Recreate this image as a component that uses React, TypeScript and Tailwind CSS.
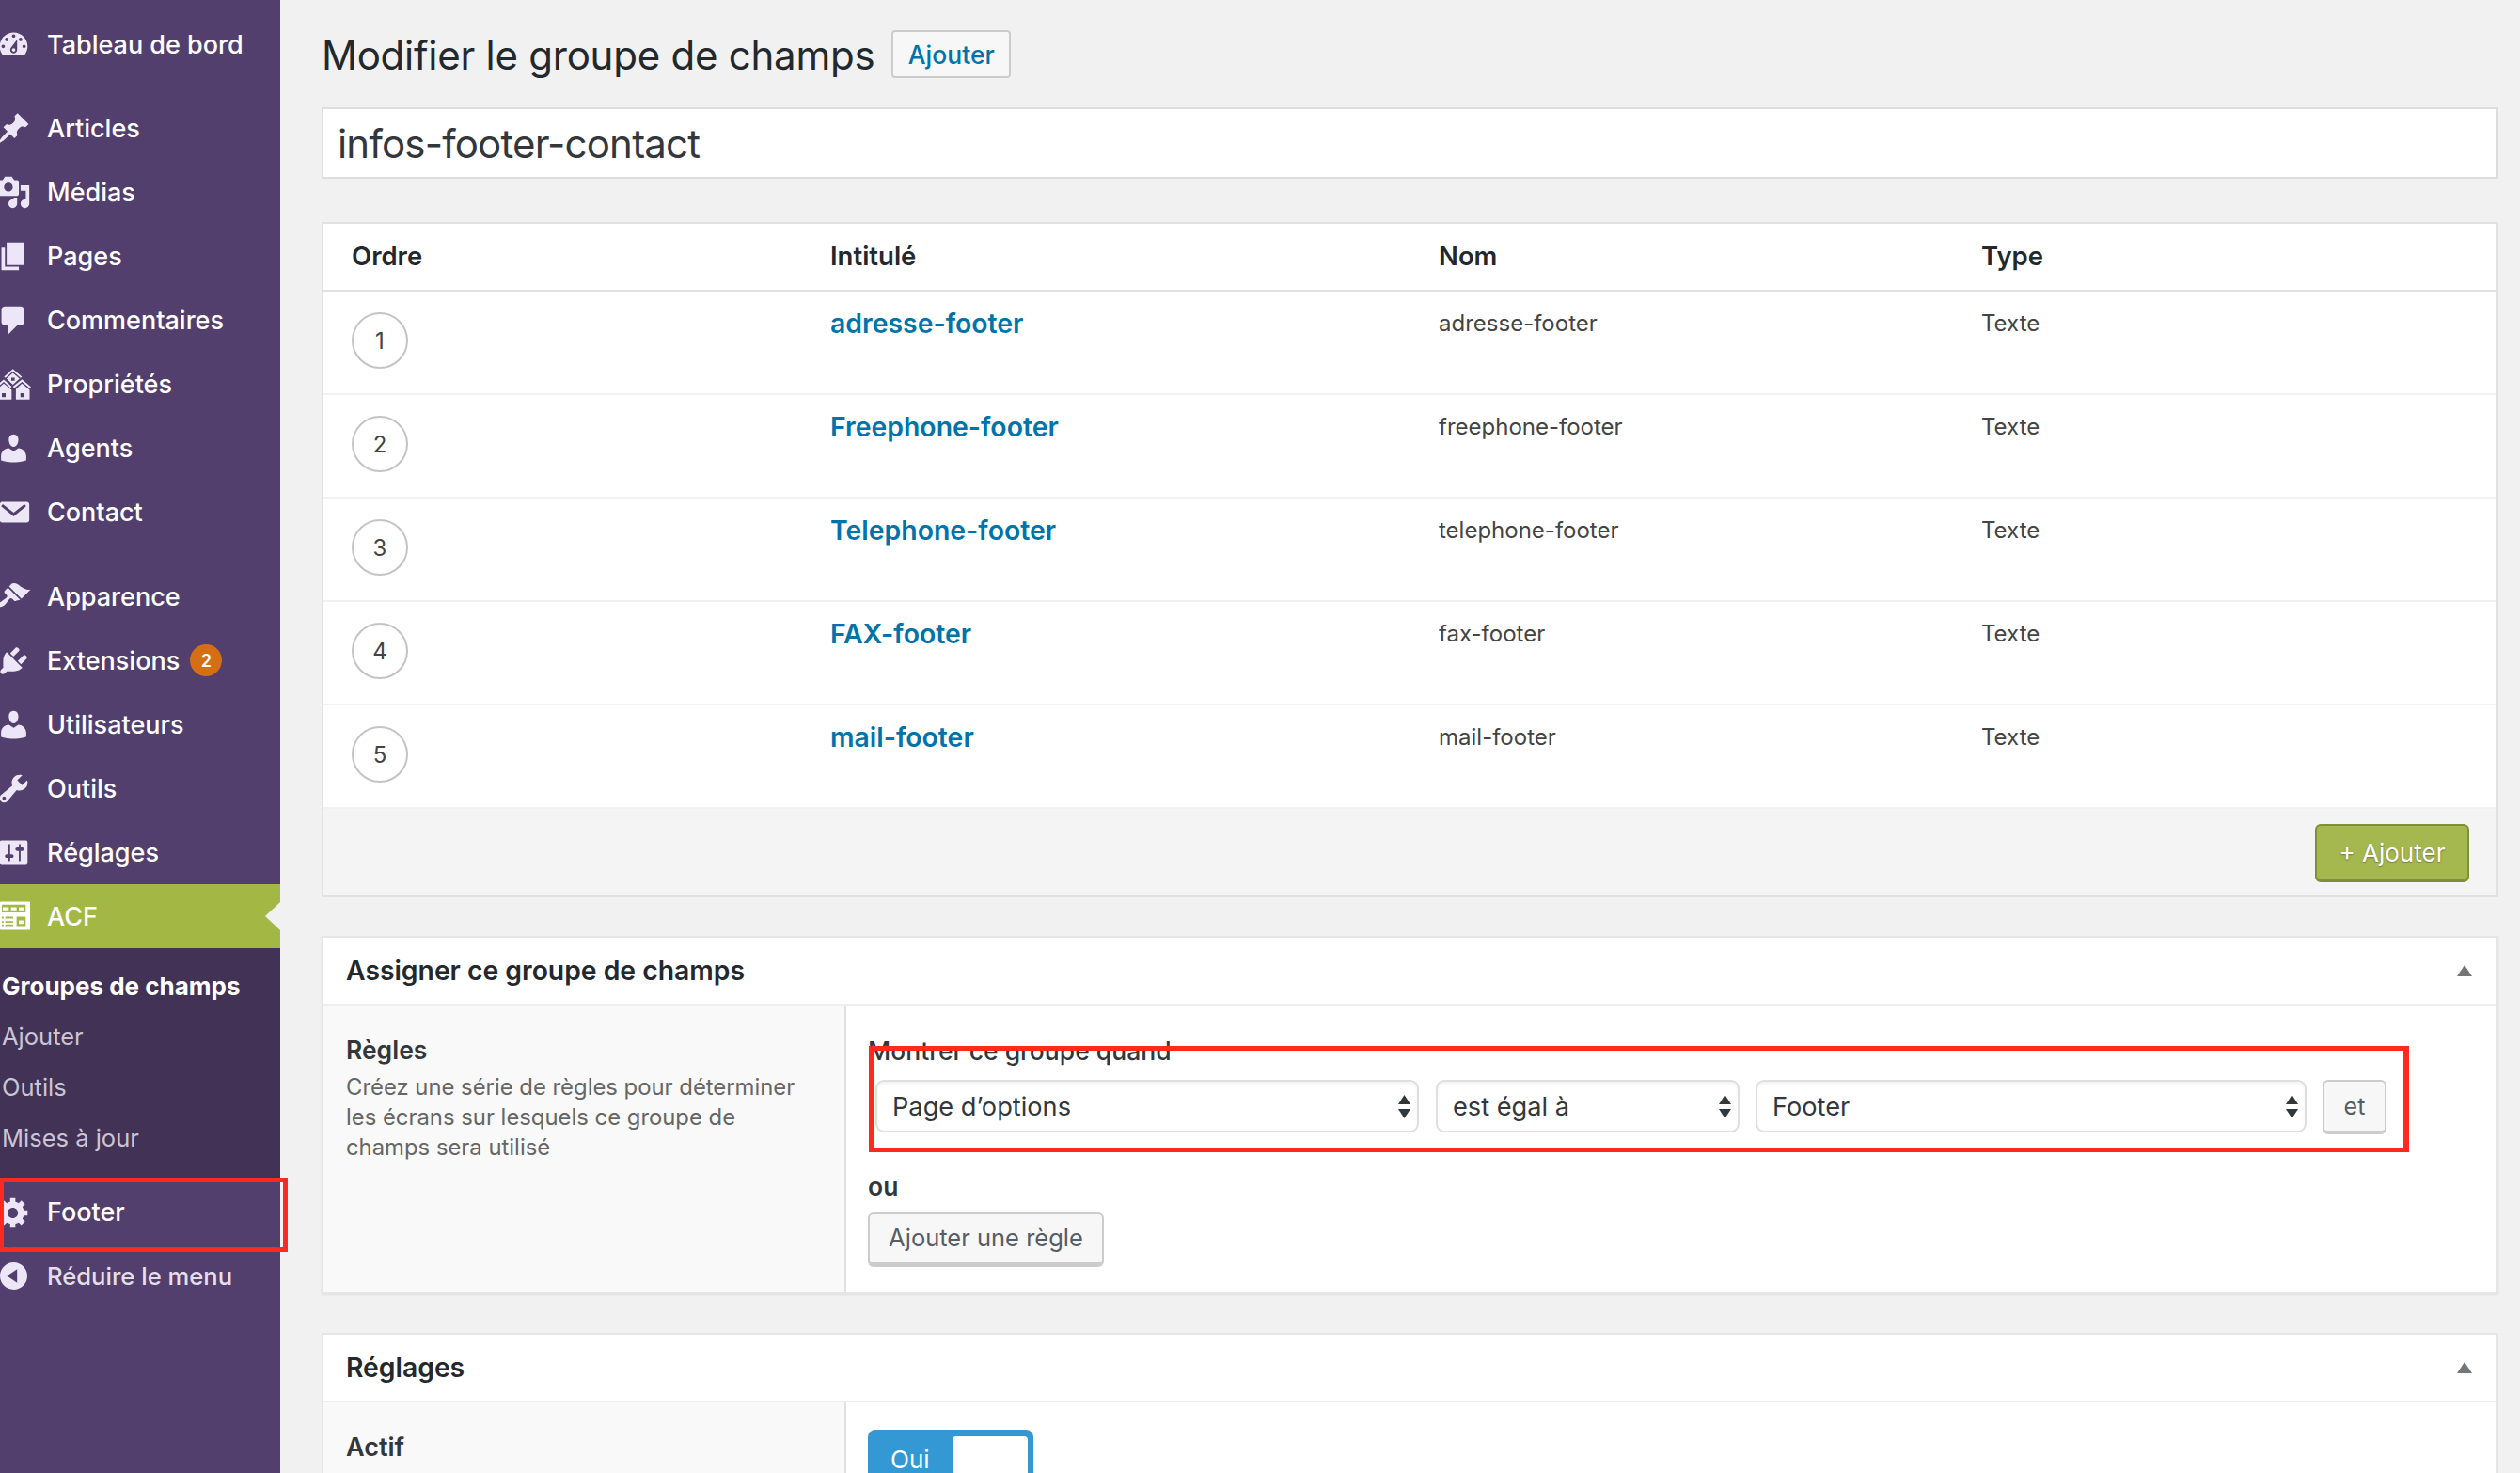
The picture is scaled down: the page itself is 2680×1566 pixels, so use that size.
import type { ReactNode } from "react";

// dashicons-style paths, viewBox 0 0 20 20
const icons = {
  dashboard:
    "M3.76 16h12.48c1.1-1.37 1.76-3.11 1.76-5 0-4.42-3.58-8-8-8s-8 3.58-8 8c0 1.89.66 3.63 1.76 5zM10 4c.55 0 1 .45 1 1s-.45 1-1 1-1-.45-1-1 .45-1 1-1zM6 6c.55 0 1 .45 1 1s-.45 1-1 1-1-.45-1-1 .45-1 1-1zm8 0c.55 0 1 .45 1 1s-.45 1-1 1-1-.45-1-1 .45-1 1-1zm-5.37 5.55L12 7v6c0 1.1-.9 2-2 2s-2-.9-2-2c0-.57.24-1.08.63-1.45zM4 10c.55 0 1 .45 1 1s-.45 1-1 1-1-.45-1-1 .45-1 1-1zm12 0c.55 0 1 .45 1 1s-.45 1-1 1-1-.45-1-1 .45-1 1-1zm-5 3c0-.55-.45-1-1-1s-1 .45-1 1 .45 1 1 1 1-.45 1-1z",
  pin: "M10.44 3.02l1.82-1.82 6.36 6.35-1.83 1.82c-1.05-.68-2.48-.57-3.41.36l-.75.75c-.92.93-1.04 2.35-.35 3.41l-1.83 1.82-2.41-2.41-2.8 2.79c-.42.42-3.38 2.71-3.8 2.29s1.86-3.39 2.28-3.81l2.79-2.79L4.1 9.36l1.83-1.82c1.05.69 2.48.57 3.4-.36l.75-.75c.93-.92 1.05-2.35.36-3.41z",
  media:
    "M13 11V4c0-.55-.45-1-1-1h-1.67L9 1H5L3.67 3H2c-.55 0-1 .45-1 1v7c0 .55.45 1 1 1h10c.55 0 1-.45 1-1zM7 4.5c1.38 0 2.5 1.12 2.5 2.5S8.38 9.5 7 9.5 4.5 8.38 4.5 7 5.62 4.5 7 4.5zM14 6h5v10.5c0 1.38-1.12 2.5-2.5 2.5S14 17.88 14 16.5s1.12-2.5 2.5-2.5c.17 0 .34.02.5.05V9h-3V6zm-4 8.05V13h2v3.5c0 1.38-1.12 2.5-2.5 2.5S7 17.88 7 16.5 8.12 14 9.5 14c.17 0 .34.02.5.05z",
  page: "M6 15V2h10v13H6zm-1 1h8v2H3V5h2v11z",
  comment:
    "M5 2h9c1.1 0 2 .9 2 2v7c0 1.1-.9 2-2 2h-2l-5 5v-5H5c-1.1 0-2-.9-2-2V4c0-1.1.9-2 2-2z",
  user: "M10 9.25c-2.27 0-2.73-3.44-2.73-3.44C7 4.02 7.82 2 9.97 2c2.16 0 2.98 2.02 2.71 3.81 0 0-.41 3.44-2.68 3.44zm0 2.57L12.72 10c2.39 0 4.52 2.33 4.52 4.53v2.49s-3.65 1.13-7.24 1.13c-3.65 0-7.24-1.13-7.24-1.13v-2.49c0-2.25 1.94-4.48 4.47-4.48z",
  mail: "M19 14.5v-9c0-.83-.67-1.5-1.5-1.5H3.49c-.83 0-1.5.67-1.5 1.5v9c0 .83.67 1.5 1.5 1.5H17.5c.83 0 1.5-.67 1.5-1.5zM17.2 6.6L10 12.4 2.8 6.6l1-1.2 6.2 4.9 6.2-4.9z",
  brush:
    "M14.48 11.06L7.41 3.99l1.5-1.5c.5-.56 2.3-.47 3.51.32 1.21.8 1.43 1.28 2.91 2.1 1.18.64 2.45 1.26 4.45.85zm-.71.71L6.7 4.7 4.93 6.47c-.39.39-.39 1.02 0 1.41l1.06 1.06c.39.39.39 1.03 0 1.42-.6.6-1.43 1.11-2.21 1.69-.35.26-.7.53-1.01.84C1.43 13.23 1 14.88 1.6 15.5c.6.6 2.25.17 3.59-1.18.31-.31.58-.66.85-1.02.57-.78 1.08-1.61 1.69-2.21.39-.39 1.02-.39 1.41 0l1.06 1.06c.39.39 1.02.39 1.41 0z",
  plug: "M13.11 4.36L9.87 7.6 8 5.73l3.24-3.24c.35-.34 1.05-.2 1.56.32.52.51.66 1.21.31 1.55zm-8 1.77l.91-1.12 9.01 9.01-1.19.84c-.71.71-2.63 1.16-3.82 1.16H6.14L4.9 17.26c-.59.59-1.54.59-2.12 0-.59-.58-.59-1.53 0-2.12l1.24-1.24v-3.88c0-1.13.4-3.19 1.09-3.89zm7.26 3.97l3.24-3.24c.34-.35 1.04-.21 1.55.31.52.51.66 1.21.31 1.55l-3.24 3.25z",
  wrench:
    "M16.68 9.77c-1.34 1.34-3.3 1.67-4.95.99l-5.41 6.52c-.99.99-2.59.99-3.58 0s-.99-2.59 0-3.57l6.52-5.42c-.68-1.65-.35-3.61.99-4.95 1.28-1.28 3.12-1.62 4.72-1.06l-2.89 2.89 2.82 2.82 2.86-2.87c.53 1.58.18 3.39-1.08 4.65zM3.81 16.21c.4.39 1.04.39 1.43 0 .4-.4.4-1.04 0-1.43-.39-.4-1.03-.4-1.43 0-.39.39-.39 1.03 0 1.43z",
  sliders:
    "M18 16V4c0-.55-.45-1-1-1H3c-.55 0-1 .45-1 1v12c0 .55.45 1 1 1h14c.55 0 1-.45 1-1zM8 11h1c.55 0 1 .45 1 1s-.45 1-1 1H8v1.5c0 .28-.22.5-.5.5s-.5-.22-.5-.5V13H6c-.55 0-1-.45-1-1s.45-1 1-1h1V5.5c0-.28.22-.5.5-.5s.5.22.5.5V11zm5-2h-1c-.55 0-1-.45-1-1s.45-1 1-1h1V5.5c0-.28.22-.5.5-.5s.5.22.5.5V7h1c.55 0 1 .45 1 1s-.45 1-1 1h-1v5.5c0 .28-.22.5-.5.5s-.5-.22-.5-.5V9z",
  gear: "M18 12h-2.18c-.17.7-.44 1.35-.81 1.93l1.54 1.54-2.1 2.1-1.54-1.54c-.58.36-1.23.63-1.91.79V19H8v-2.18c-.68-.16-1.33-.43-1.91-.79l-1.54 1.54-2.12-2.12 1.54-1.54c-.36-.58-.63-1.23-.79-1.91H1V9.03h2.17c.16-.7.44-1.35.8-1.94L2.43 5.55l2.1-2.1 1.54 1.54c.58-.37 1.24-.64 1.93-.81V2h3v2.18c.68.16 1.33.43 1.91.79l1.54-1.54 2.12 2.12-1.54 1.54c.36.59.64 1.24.8 1.94H18V12zm-8.5 1.5c1.66 0 3-1.34 3-3s-1.34-3-3-3-3 1.34-3 3 1.34 3 3 3z",
  collapse:
    "M10 2.16c4.33 0 7.84 3.51 7.84 7.84s-3.51 7.84-7.84 7.84S2.16 14.33 2.16 10 5.71 2.16 10 2.16zm2 11.72V6.12L6.18 9.97z",
  houses:
    "M4.5 5.68L9.55 1.17 14.8 5.68 14 6.4 9.55 2.5 5.3 6.4zM9.55 3.5L5.9 6.8l3.65 3.5 3.85-3.5zM8.65 6.2h1.95v1.8H8.65zM-1 11.5l5.32-4.2 4.58 4.1-.7.7-3.88-3.4-4.62 3.8zM4.32 9.6L0 13.3v5.5h8.83v-5.6zM3.24 15.2H5.4v2.2H3.24zM9.6 11.4l5.2-4.2 5.2 4.4-.7.7-4.5-3.7-4.5 3.7zM14.8 9.6l-3.5 3.3v5.9h7.9v-5.6zM13.9 15.2h2.3v2.2h-2.3z",
  acf: "M2.16 1.9c0-.3.25-.55.55-.55H19c.25 0 .46.2.46.45V17.1c0 .25-.2.47-.46.47H2.7c-.3 0-.54-.24-.54-.54zM3.24 3.1v4.4H16.9V3.1zM3.8 4.6h3.4v1.8H3.8zM8.5 4.6h3.2v1.8H8.5zM13 4.6h3.2v1.8H13zM3.2 10v1.1h1.1V10zM5.2 10v1.1h4.5V10zM3.2 12.6v.9h1.1v-.9zM5.2 12.6v.9h4.5v-.9zM3.2 14.5v.9h1.1v-.9zM5.2 14.5v.9h4.5v-.9zM11.7 10v5.4h5.2V10zM13 12.2h3v2h-3z",
};

function DashIcon({ d, className }: { d: string; className?: string }) {
  return (
    <svg viewBox="0 0 20 20" fill="currentColor" fillRule="evenodd" className={className}>
      <path d={d} />
    </svg>
  );
}

function MenuItem({
  icon,
  label,
  children,
  active,
  dim,
}: {
  icon: string;
  label: string;
  children?: ReactNode;
  active?: boolean;
  dim?: boolean;
}) {
  return (
    <div
      className={`relative flex h-[68px] items-center ${active ? "bg-[#a3b745] text-white" : dim ? "text-[#e3dfe9]" : "text-white"}`}
    >
      <DashIcon
        d={icon}
        className={`ml-[-4px] mr-[17px] h-[37px] w-[37px] shrink-0 ${active ? "text-white" : "text-[#ece6f6]"}`}
      />
      <span className={`pt-[2px] ${dim ? "text-[25.6px]" : "text-[27px]"} font-medium`}>{label}</span>
      {children}
      {active && (
        <span className="absolute right-0 top-[19px] h-0 w-0 border-y-[15px] border-r-[16px] border-y-transparent border-r-[#f1f1f1]" />
      )}
    </div>
  );
}

function Sidebar() {
  return (
    <aside className="flex h-full w-[298px] shrink-0 flex-col bg-[#523f6d] pt-[13px]">
      <MenuItem icon={icons.dashboard} label="Tableau de bord" />
      <div className="h-[21px]" />
      <MenuItem icon={icons.pin} label="Articles" />
      <MenuItem icon={icons.media} label="Médias" />
      <MenuItem icon={icons.page} label="Pages" />
      <MenuItem icon={icons.comment} label="Commentaires" />
      <MenuItem icon={icons.houses} label="Propriétés" />
      <MenuItem icon={icons.user} label="Agents" />
      <MenuItem icon={icons.mail} label="Contact" />
      <div className="h-[22px]" />
      <MenuItem icon={icons.brush} label="Apparence" />
      <MenuItem icon={icons.plug} label="Extensions">
        <span className="ml-[11px] flex h-[34px] w-[34px] items-center justify-center rounded-full bg-[#d46f15] text-[18px] font-semibold text-white">
          2
        </span>
      </MenuItem>
      <MenuItem icon={icons.user} label="Utilisateurs" />
      <MenuItem icon={icons.wrench} label="Outils" />
      <MenuItem icon={icons.sliders} label="Réglages" />
      <MenuItem icon={icons.acf} label="ACF" active />
      <div className="flex flex-col bg-[#413256] pb-[15px] pl-[2px] pt-[13px] text-[25.5px] text-[#cbc5d3]">
        <div className="flex h-[54px] items-center text-[26px] font-bold text-white">Groupes de champs</div>
        <div className="flex h-[54px] items-center">Ajouter</div>
        <div className="flex h-[54px] items-center">Outils</div>
        <div className="flex h-[54px] items-center">Mises à jour</div>
      </div>
      <div className="h-[2px]" />
      <MenuItem icon={icons.gear} label="Footer" />
      <MenuItem icon={icons.collapse} label="Réduire le menu" dim />
    </aside>
  );
}

const fields = [
  { n: 1, label: "adresse-footer", name: "adresse-footer" },
  { n: 2, label: "Freephone-footer", name: "freephone-footer" },
  { n: 3, label: "Telephone-footer", name: "telephone-footer" },
  { n: 4, label: "FAX-footer", name: "fax-footer" },
  { n: 5, label: "mail-footer", name: "mail-footer" },
];

function FieldsTable() {
  return (
    <div className="border-2 border-[#e1e1e1] bg-white">
      <div className="grid h-[72px] grid-cols-[509px_647px_577px_1fr] items-center border-b-2 border-[#e1e1e1] pl-[30px] text-[27.5px] font-semibold text-[#23282d]">
        <div>Ordre</div>
        <div>Intitulé</div>
        <div>Nom</div>
        <div>Type</div>
      </div>
      {fields.map((f) => (
        <div
          key={f.n}
          className="grid h-[110px] grid-cols-[509px_647px_577px_1fr] items-start border-b-2 border-[#f1f1f1] pl-[30px]"
        >
          <div className="pt-[22px]">
            <div className="flex h-[60px] w-[60px] items-center justify-center rounded-full border-2 border-[#c4c4c4] pt-[1px] text-[24px] text-[#444]">
              {f.n}
            </div>
          </div>
          <div className="pt-[18px] text-[28.4px] font-semibold leading-[32px] text-[#0073aa]">{f.label}</div>
          <div className="pt-[18px] text-[24px] leading-[32px] text-[#444]">{f.name}</div>
          <div className="pt-[18px] text-[24px] leading-[32px] text-[#444]">Texte</div>
        </div>
      ))}
      <div className="flex h-[92px] items-start justify-end bg-[#f4f4f4] pr-[29px] pt-[16px]">
        <button className="flex h-[62px] w-[164px] items-center justify-center rounded-[6px] border-2 border-b-[4px] border-[#7f8f36] bg-[#a5b74f] text-[26px] text-white [text-shadow:0_1px_2px_rgba(0,0,0,0.35)]">
          + Ajouter
        </button>
      </div>
    </div>
  );
}

function SectionHeader({ title }: { title: string }) {
  return (
    <div className="flex h-[72px] items-center justify-between border-b-2 border-[#eeeeee] pl-[24px] pr-[26px]">
      <h2 className="text-[28.3px] font-semibold text-[#23282d]">{title}</h2>
      <svg viewBox="0 0 16 12" className="h-[12px] w-[16px] text-[#72777c]" fill="currentColor">
        <polygon points="8,0 16,12 0,12" />
      </svg>
    </div>
  );
}

function FakeSelect({ value, className }: { value: string; className: string }) {
  return (
    <div
      className={`flex h-[56px] items-center justify-between rounded-[9px] border-2 border-[#dfdfdf] bg-white pl-[16px] pr-[7px] text-[27.2px] text-[#32373c] shadow-[inset_0_2px_3px_rgba(0,0,0,0.06)] ${className}`}
    >
      <span className="pt-[2px]">{value}</span>
      <svg viewBox="0 0 13 25" className="h-[25px] w-[13px] text-[#32373c]" fill="currentColor">
        <polygon points="6.5,0 13,10 0,10" />
        <polygon points="0,15 13,15 6.5,25" />
      </svg>
    </div>
  );
}

export default function App() {
  return (
    <div className="flex h-[1566px] w-[2680px] overflow-hidden bg-[#f1f1f1] font-['Inter',sans-serif]">
      <Sidebar />
      <main className="relative flex min-w-0 flex-1 flex-col pl-[44px] pr-[23px] pt-[32px]">
        <div className="mb-[31px] flex h-[51px] shrink-0 items-center gap-[18px]">
          <h1 className="pt-[2px] text-[42px] leading-none tracking-[-0.25px] text-[#23282d]">
            Modifier le groupe de champs
          </h1>
          <button className="flex h-[51px] w-[127px] items-center justify-center rounded-[4px] border-2 border-[#cccccc] bg-[#f7f7f7] pt-[2px] text-[26.5px] font-medium text-[#0073aa]">
            Ajouter
          </button>
        </div>
        <div className="mb-[46px] flex h-[76px] shrink-0 items-center border-2 border-[#dddddd] bg-white pl-[15px] text-[42px] tracking-[-0.8px] text-[#32373c]">
          infos-footer-contact
        </div>
        <FieldsTable />

        <section className="mt-[41px] flex h-[381px] shrink-0 flex-col border-2 border-[#e5e5e5] bg-white shadow-[0_1px_2px_rgba(0,0,0,0.08)]">
          <SectionHeader title="Assigner ce groupe de champs" />
          <div className="flex min-h-0 flex-1">
            <div className="w-[556px] shrink-0 border-r-2 border-[#e1e1e1] bg-[#f9f9f9] pl-[24px] pt-[31px]">
              <div className="text-[26.5px] font-semibold leading-[32px] text-[#32373c]">Règles</div>
              <p className="mt-[8px] w-[500px] text-[23.85px] leading-[32px] text-[#666666]">
                Créez une série de règles pour déterminer les écrans sur lesquels ce groupe de champs sera utilisé
              </p>
            </div>
            <div className="flex-1 pl-[23px] pt-[32px]">
              <div className="text-[26.5px] font-medium leading-[32px] text-[#32373c]">Montrer ce groupe quand</div>
              <div className="ml-[8px] mt-[15px] flex items-start">
                <FakeSelect value="Page d’options" className="w-[578px]" />
                <FakeSelect value="est égal à" className="ml-[18px] w-[323px]" />
                <FakeSelect value="Footer" className="ml-[17px] w-[586px]" />
                <button className="ml-[17px] flex h-[58px] w-[68px] items-center justify-center rounded-[6px] border-2 border-b-[4px] border-[#cccccc] bg-[#f7f7f7] pt-[1px] text-[25px] text-[#555d66]">
                  et
                </button>
              </div>
              <div className="mt-[39px] text-[26.5px] font-semibold leading-[32px] text-[#32373c]">ou</div>
              <button className="mt-[12px] flex h-[58px] w-[251px] items-center justify-center rounded-[6px] border-2 border-b-[5px] border-[#cccccc] bg-[#f7f7f7] text-[25.5px] text-[#555d66]">
                Ajouter une règle
              </button>
            </div>
          </div>
        </section>

        <section className="mt-[41px] flex h-[300px] shrink-0 flex-col border-2 border-[#e5e5e5] bg-white">
          <SectionHeader title="Réglages" />
          <div className="flex min-h-0 flex-1">
            <div className="w-[556px] shrink-0 border-r-2 border-[#e1e1e1] bg-[#f9f9f9] pl-[24px] pt-[32px]">
              <div className="text-[27px] font-semibold leading-[32px] text-[#32373c]">Actif</div>
            </div>
            <div className="flex-1 pl-[23px] pt-[29px]">
              <div className="relative h-[80px] w-[176px] rounded-[8px] bg-[#3498d5] pl-[24px] pt-[12px] text-[26px] text-white">
                Oui
                <span className="absolute right-[6px] top-[7px] h-[70px] w-[80px] rounded-[4px] bg-white" />
              </div>
            </div>
          </div>
        </section>

        {/* red annotation drawn over the rule row */}
        <div className="absolute left-[626px] top-[1112px] h-[113px] w-[1638px] border-x-[6px] border-y-[5px] border-[#ff2a1f]" />
      </main>
      {/* red annotation around the Footer menu entry */}
      <div className="absolute left-0 top-[1252px] h-[79px] w-[306px] border-y-[5px] border-l-[4px] border-r-[5px] border-[#ff2a1f]" />
    </div>
  );
}
